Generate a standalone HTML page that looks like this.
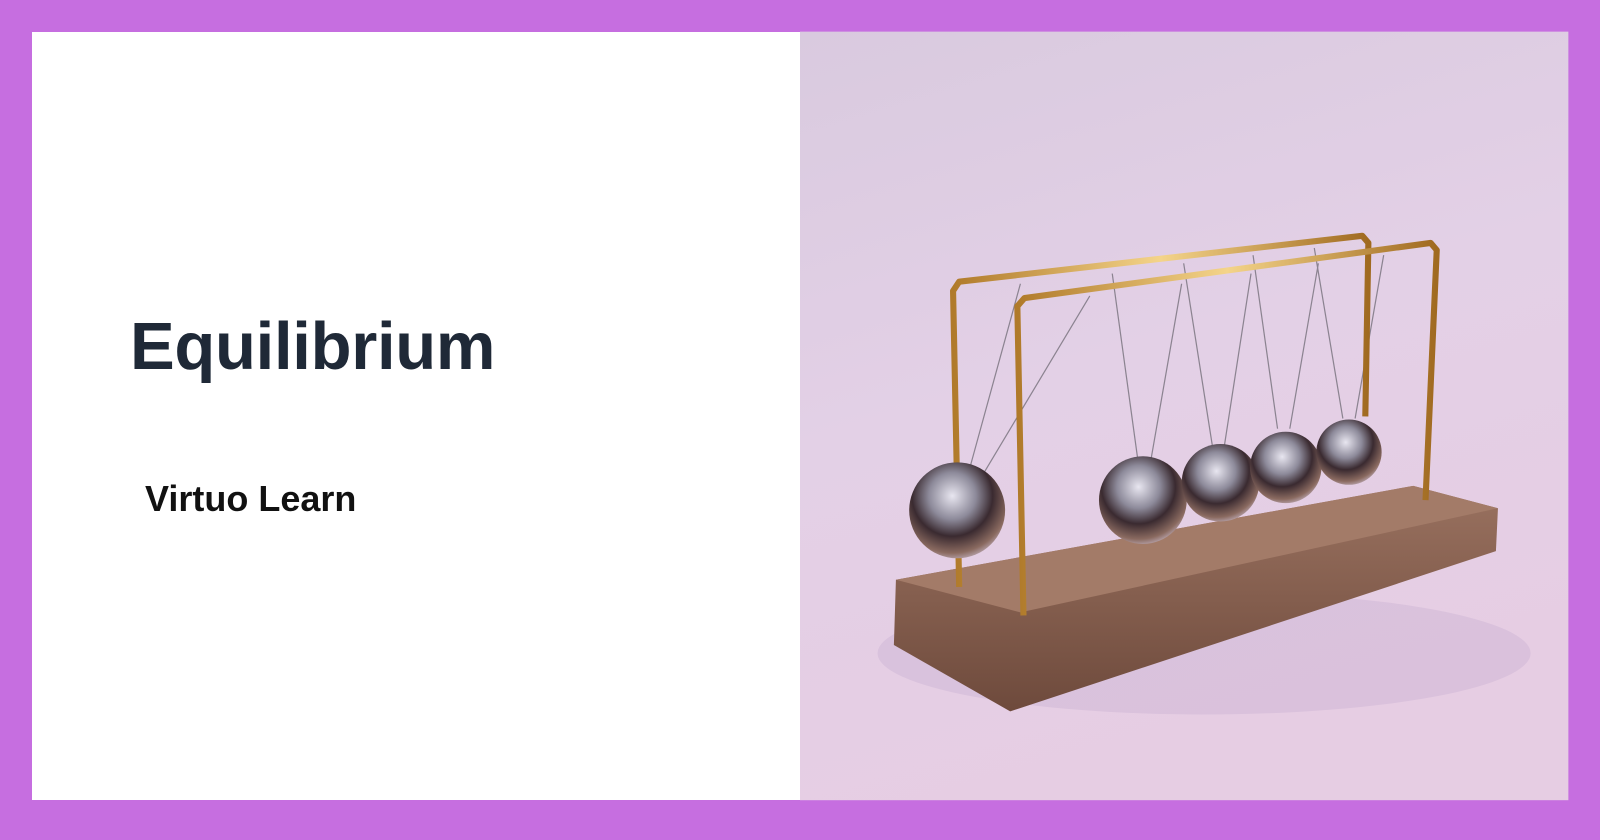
<!DOCTYPE html>
<html><head><meta charset="utf-8"><style>
html,body{margin:0;padding:0;width:1600px;height:840px;overflow:hidden;background:#c66ee0;font-family:"Liberation Sans",sans-serif}
#w{position:absolute;left:32px;top:32px;width:768px;height:768px;background:#fff}
h1{position:absolute;left:98px;top:276px;margin:0;font-size:67px;font-weight:bold;color:#1f2937;letter-spacing:-0.3px}
p{position:absolute;left:113px;top:446px;margin:0;font-size:36px;font-weight:bold;color:#111}
svg{position:absolute;left:0;top:0}
</style></head><body>
<svg width="1600" height="840" viewBox="0 0 1568 823" preserveAspectRatio="none">
<defs>
<linearGradient id="bg" x1="0" y1="0" x2="0.3" y2="1"><stop offset="0" stop-color="#d9cadf"/><stop offset="0.5" stop-color="#e3d0e6"/><stop offset="1" stop-color="#e6cde3"/></linearGradient>
<linearGradient id="wd" x1="0" y1="0" x2="0" y2="1"><stop offset="0" stop-color="#9a7260"/><stop offset="1" stop-color="#6e4a3c"/></linearGradient>
<linearGradient id="gd" x1="0" y1="0" x2="1" y2="0"><stop offset="0" stop-color="#b07a2a"/><stop offset="0.5" stop-color="#f4d48a"/><stop offset="1" stop-color="#a06a20"/></linearGradient>
<radialGradient id="ball" cx="0.45" cy="0.35" r="0.7"><stop offset="0" stop-color="#e8e6f0"/><stop offset="0.35" stop-color="#8d8a9a"/><stop offset="0.6" stop-color="#3a2a30"/><stop offset="0.85" stop-color="#8a6a60"/><stop offset="1" stop-color="#c9b9c8"/></radialGradient>
</defs>
<rect x="784" y="31" width="753" height="753" fill="url(#bg)"/>
<ellipse cx="1180" cy="640" rx="320" ry="60" fill="#cdb6d6" opacity="0.5"/>
<polygon points="878,568 1385,476 1468,498 1466,540 990,697 876,632" fill="url(#wd)"/>
<polygon points="878,568 1385,476 1468,498 1000,600" fill="#a37b68"/>
<g stroke="#8b8390" stroke-width="1.2" fill="none">
<line x1="1000" y1="278" x2="950" y2="460"/><line x1="1068" y1="290" x2="965" y2="462"/>
<line x1="1090" y1="268" x2="1115" y2="450"/><line x1="1158" y1="278" x2="1128" y2="450"/>
<line x1="1160" y1="258" x2="1188" y2="436"/><line x1="1226" y1="268" x2="1200" y2="436"/>
<line x1="1228" y1="250" x2="1252" y2="420"/><line x1="1292" y1="258" x2="1264" y2="420"/>
<line x1="1288" y1="243" x2="1316" y2="410"/><line x1="1356" y1="250" x2="1328" y2="410"/>
</g>
<g fill="none" stroke="url(#gd)" stroke-width="6" stroke-linejoin="round">
<polyline points="940,575 934,285 940,276 1335,231 1341,238 1338,408"/>
<polyline points="1003,603 997,300 1004,292 1402,238 1408,245 1397,490"/>
</g>
<circle cx="938" cy="500" r="47" fill="url(#ball)"/>
<circle cx="1120" cy="490" r="43" fill="url(#ball)"/>
<circle cx="1196" cy="473" r="38" fill="url(#ball)"/>
<circle cx="1260" cy="458" r="35" fill="url(#ball)"/>
<circle cx="1322" cy="443" r="32" fill="url(#ball)"/>
</svg>
<div id="w"><h1>Equilibrium</h1><p>Virtuo Learn</p></div>
</body></html>
